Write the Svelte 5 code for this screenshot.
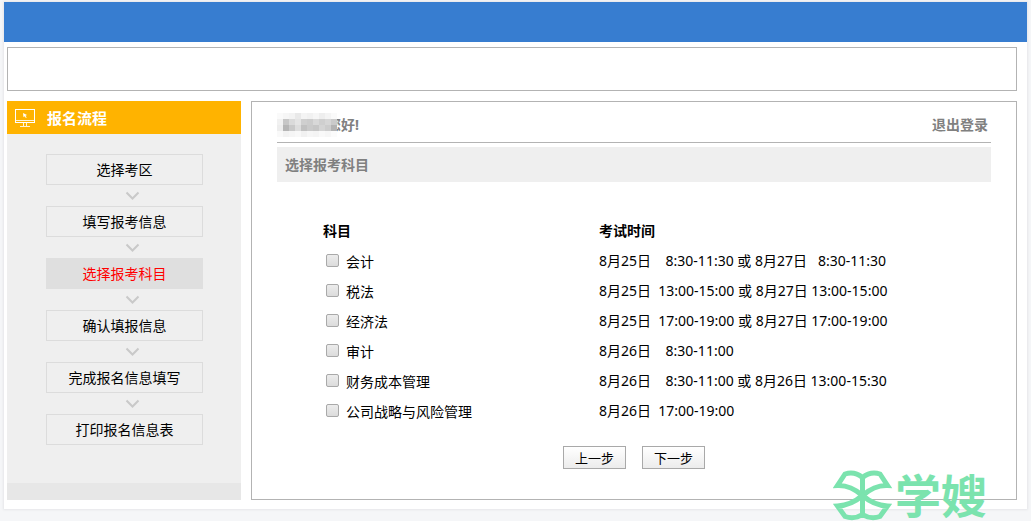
<script>
  const steps = [
    '选择考区',
    '填写报考信息',
    '选择报考科目',
    '确认填报信息',
    '完成报名信息填写',
    '打印报名信息表',
  ];
  const current = 2;

  // runs of spaces keep the hours aligned, see .time
  const subjects = [
    { name: '会计', time: '8月25日    8:30-11:30 或 8月27日   8:30-11:30' },
    { name: '税法', time: '8月25日  13:00-15:00 或 8月27日 13:00-15:00' },
    { name: '经济法', time: '8月25日  17:00-19:00 或 8月27日 17:00-19:00' },
    { name: '审计', time: '8月26日    8:30-11:00' },
    { name: '财务成本管理', time: '8月26日    8:30-11:00 或 8月26日 13:00-15:30' },
    { name: '公司战略与风险管理', time: '8月26日  17:00-19:00' },
  ];

  // masked user name, 6px tiles
  const tiles = [
    ['#fafafa', '#f6f6f6', '#f3f3f3', '#e9e9e9', '#f4f4f4', '#f1f1f1', '#f6f6f6', '#eeeeee', '#f4f4f4', '#fafafa'],
    ['#f1f1f1', '#c6c6c6', '#dadada', '#e4e4e4', '#cfcfcf', '#cccccc', '#d8d8d8', '#cfcfcf', '#d6d6d6', '#cacaca'],
    ['#ededed', '#b5b5b5', '#c9c9c9', '#dddddd', '#c1c1c1', '#cacaca', '#c6c6c6', '#d4d4d4', '#cccccc', '#b3b3b3'],
    ['#f9f9f9', '#f2f2f2', '#f5f5f5', '#f8f8f8', '#f1f1f1', '#f6f6f6', '#f4f4f4', '#f9f9f9', '#f6f6f6', '#fbfbfb'],
  ];
</script>

<div class="screen">
  <div class="page">
    <header class="banner"></header>
    <div class="notice"></div>

    <div class="columns">
      <aside class="sidebar">
        <h2>
          <svg width="22" height="20" viewBox="0 0 22 20" fill="none" stroke="#fff">
            <rect x="1.5" y="1.5" width="19" height="13" />
            <path d="M1 12.5H21M9.5 15V18M12.5 15V18M6 18.5H16" stroke-opacity="0.85" />
            <path d="M9 5l4 2-1.500.8 1.200 1.700-.8.5-1.200-1.700-1.200 1z" fill="#fff" stroke="none" />
          </svg>
          报名流程
        </h2>
        <ol class="steps">
          {#each steps as step, i}
            <li>
              <span class="step" class:active={i === current}>{step}</span>
              {#if i < steps.length - 1}
                <svg class="arrow" width="15" height="21" viewBox="0 0 15 21" fill="none" stroke="#c9c9c9" stroke-width="2">
                  <path d="M1.500 7.500L7.500 13.500L13.500 7.500" />
                </svg>
              {/if}
            </li>
          {/each}
        </ol>
        <div class="sidebar-foot"></div>
      </aside>

      <main class="panel">
        <div class="userbar">
          <span class="hello">
            <svg class="mask" width="60" height="24" viewBox="0 0 60 24" shape-rendering="crispEdges">
              {#each tiles as row, y}
                {#each row as fill, x}
                  <rect x={x * 6} y={y * 6} width="6" height="6" {fill} />
                {/each}
              {/each}
            </svg>
            您好!
          </span>
          <a href="#logout">退出登录</a>
        </div>

        <h1>选择报考科目</h1>

        <form>
          <table>
            <thead>
              <tr><th class="subject">科目</th><th>考试时间</th></tr>
            </thead>
            <tbody>
              {#each subjects as s, i}
                <tr>
                  <td>
                    <div class="pick">
                      <input type="checkbox" id="subject-{i}" />
                      <label for="subject-{i}">{s.name}</label>
                    </div>
                  </td>
                  <td class="time">{s.time}</td>
                </tr>
              {/each}
            </tbody>
          </table>
          <div class="actions">
            <button type="button">上一步</button>
            <button type="button">下一步</button>
          </div>
        </form>
      </main>
    </div>
  </div>

  <div class="brand">
    <svg width="60" height="52" viewBox="0 0 60 52" fill="none" stroke="#7be3ae" stroke-width="5">
      <path d="M29.500 8V46" />
      <path d="M29.500 8.500C24 4 18 3 12 5L4.500 16.500C14 16 22 20 29.500 26.500C37 20 45 16 54.500 16.500L47 5C41 3 35 4 29.500 8.500Z" />
      <path d="M29.500 45.500C24 49 18 49.500 12 47.500L4.500 37C14 36.500 22 33 29.500 26.500C37 33 45 36.500 54.500 37L47 47.500C41 49.500 35 49 29.500 45.500Z" />
    </svg>
    <span>学嫂</span>
  </div>
</div>

<style>
  :global(body) {
    background: #f5f6f8;
  }

  .screen {
    position: relative;
    box-sizing: border-box;
    min-height: 100vh;
    padding: 2px 4px 12px;
    color: #000;
    font-family: 'Noto Sans', 'Noto Sans CJK SC', sans-serif;
    font-size: 14px;
    line-height: 20px;
  }

  .page {
    padding: 0 10px 9px 3px;
    background: #fff;
    box-shadow: 0 0 2px 1px #e6e7ea;
  }

  .banner {
    height: 40px;
    margin: 0 -10px 5px -3px;
    background: #377dd0;
  }

  .notice {
    height: 42px;
    margin-bottom: 10px;
    border: 1px solid #b3b3b3;
  }

  .columns {
    display: flex;
    gap: 10px;
  }

  .sidebar {
    flex: 0 0 234px;
    display: flex;
    flex-direction: column;
    background: #efefef;
  }

  h2 {
    display: flex;
    align-items: center;
    gap: 11px;
    height: 33px;
    margin: 0;
    padding: 0 7px;
    background: #ffb300;
    color: #fff;
    font-size: 15px;
  }

  .steps {
    flex: 1;
    margin: 0;
    padding: 20px 38px 0 39px;
    list-style: none;
  }

  .step {
    display: block;
    border: 1px solid #dcdcdc;
    line-height: 29px;
    text-align: center;
  }

  .step.active {
    border-color: #dfdfdf;
    background: #dfdfdf;
    color: #f00;
  }

  .arrow {
    display: block;
    margin: 0 auto;
    padding-left: 16px;
  }

  .sidebar-foot {
    height: 17px;
    background: #e7e7e7;
  }

  .panel {
    flex: 1;
    padding: 0 25px 30px;
    border: 1px solid #b3b3b3;
  }

  .userbar {
    display: flex;
    justify-content: space-between;
    align-items: center;
    height: 41px;
    padding: 6px 3px 0 0;
    box-sizing: border-box;
    border-bottom: 1px solid #b3b3b3;
    margin-bottom: 4px;
    color: #808080;
    font-weight: bold;
  }

  .hello {
    position: relative;
    padding-left: 50px;
  }

  .mask {
    position: absolute;
    left: 0;
    top: -2px;
  }

  .userbar a {
    color: inherit;
    text-decoration: none;
  }

  h1 {
    margin: 0 0 34px;
    padding: 0 8px;
    background: #efefef;
    color: #808080;
    font-size: 14px;
    line-height: 35px;
  }

  form {
    padding-left: 46px;
  }

  table {
    border-collapse: collapse;
  }

  th,
  td {
    height: 30px;
    padding: 0;
    text-align: left;
  }

  .subject {
    width: 276px;
  }

  .pick {
    display: flex;
    align-items: center;
    gap: 7px;
    padding-left: 3px;
  }

  .pick label {
    padding-top: 2px;
  }

  .pick input {
    appearance: none;
    width: 13px;
    height: 13px;
    margin: 0 0 2px;
    border: 1px solid #a9a9a9;
    border-radius: 2px;
    background: linear-gradient(#ececec, #dcdcdc);
  }

  .pick input:checked {
    background: #666;
  }

  .time {
    white-space: pre;
  }

  .actions {
    display: flex;
    justify-content: center;
    gap: 16px;
    margin-top: 20px;
    padding-right: 46px;
  }

  button {
    width: 63px;
    height: 23px;
    padding: 0;
    border: 1px solid #a9a9a9;
    background: linear-gradient(#fff, #ececec);
    color: #000;
    font: 13px/21px 'Noto Sans CJK SC', sans-serif;
  }

  /* watermark over the page corner */
  .brand {
    position: absolute;
    right: 44px;
    bottom: 0;
    display: flex;
    align-items: center;
    gap: 2px;
    color: #7be3ae;
    font-size: 46px;
    font-weight: bold;
    line-height: 52px;
    pointer-events: none;
  }
</style>
